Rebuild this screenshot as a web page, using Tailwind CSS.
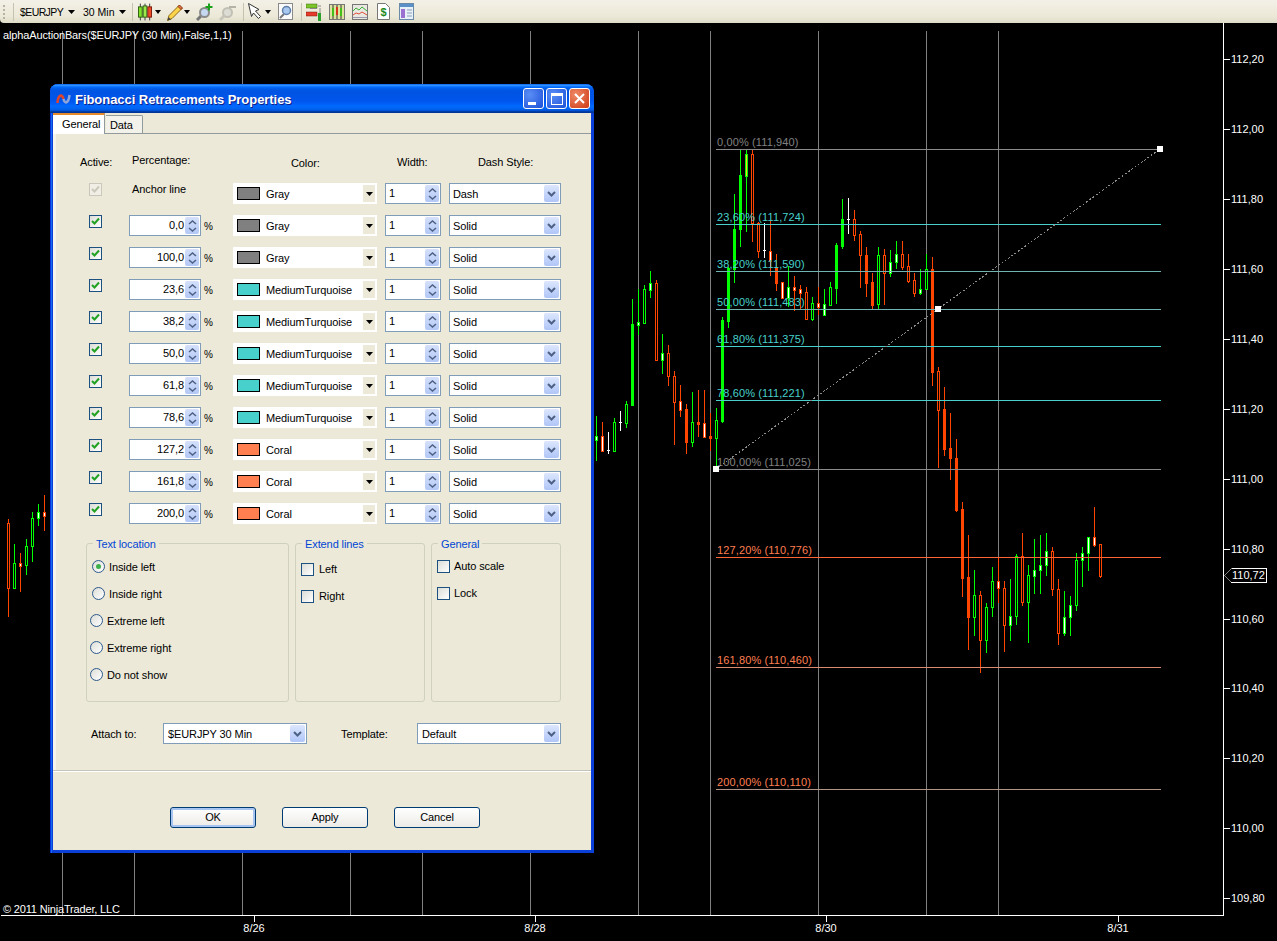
<!DOCTYPE html>
<html lang="en">
<head>
    <meta charset="UTF-8">
    <title>Fibonacci Retracements Properties</title>
    <script src="https://cdn.jsdelivr.net/npm/@tailwindcss/browser@4"></script>
</head>
<body class="bg-black overflow-hidden font-['Liberation_Sans',Arial,sans-serif] text-[11px] leading-[14px] text-black">
<div class="relative w-[1277px] h-[941px] flex flex-col">

    <!-- toolbar -->
    <div class="h-[23px] shrink-0 flex items-center bg-[linear-gradient(#f3f1e7,#ece9d8_70%,#dedbc8)] rounded-bl-[4px] text-[10.5px] whitespace-nowrap">
        <div class="ml-[3px] w-[2px] h-[14px] border-l-2 border-dotted border-[#b5b3a5]"></div>
        <div class="ml-[8px] w-px h-[18px] bg-[#c5c2b0]"></div>
        <span class="ml-[6px] w-[43px] tracking-[-0.6px]">$EURJPY</span>
        <svg class="ml-[5px]" width="7" height="4"><path d="M0 0h7L3.500 4z"/></svg>
        <span class="ml-[8px] w-[31px]">30 Min</span>
        <svg class="ml-[5px]" width="7" height="4"><path d="M0 0h7L3.500 4z"/></svg>
        <div class="ml-[6px] w-px h-[18px] bg-[#c5c2b0]"></div>
        <!-- candles -->
        <svg class="ml-[5px]" width="14" height="18" viewBox="0 0 15 18">
            <path d="M2.500 0v18M7.500 0v18M12.500 0v18" stroke="#333"/>
            <rect x="0.500" y="3.500" width="4" height="11" fill="#7fe02a" stroke="#2c5a10"/>
            <rect x="5.500" y="2.500" width="4" height="12" fill="#9be84a" stroke="#2c5a10"/>
            <rect x="10.500" y="3.500" width="4" height="11" fill="#f04a2a" stroke="#7a1c08"/>
        </svg>
        <svg class="ml-[3px]" width="6" height="4"><path d="M0 0h6L3 4z"/></svg>
        <!-- pencil -->
        <svg class="ml-[6px]" width="16" height="18" viewBox="0 0 16 18">
            <path d="M0.500 17.500l1.500-5L12 2.500l3 3L5 15.500z" fill="#fbd44a" stroke="#8a6a14"/>
            <path d="M11 3.500l1.500-1.500 3 3L14 6.500z" fill="#e8704a" stroke="#8a3a14"/>
            <path d="M0.500 17.500l1-3.500 2.500 2.500z" fill="#444"/>
        </svg>
        <svg class="ml-[1px]" width="6" height="4"><path d="M0 0h6L3 4z"/></svg>
        <!-- zoom in -->
        <svg class="ml-[6px]" width="17" height="18" viewBox="0 0 17 18">
            <path d="M1 17l5-5" stroke="#777" stroke-width="3"/>
            <circle cx="8.500" cy="9.500" r="4.500" fill="#c5d8f0" stroke="#8a8a8a" stroke-width="2"/>
            <path d="M13 0.500v7M9.500 4h7" stroke="#1aa01a" stroke-width="2"/>
        </svg>
        <!-- zoom out -->
        <svg class="ml-[6px]" width="17" height="18" viewBox="0 0 17 18">
            <path d="M1 17l5-5" stroke="#c8c6ba" stroke-width="3"/>
            <circle cx="8.500" cy="9.500" r="4.500" fill="#dcdcd4" stroke="#c2c0b4" stroke-width="2"/>
            <path d="M10 4h7" stroke="#b5b3a7" stroke-width="2"/>
        </svg>
        <div class="ml-[7px] w-px h-[18px] bg-[#c5c2b0]"></div>
        <!-- pointer -->
        <svg class="ml-[4px]" width="14" height="17" viewBox="0 0 14 17">
            <path d="M0.500 0.500v0L11 6.500 7.500 8l5 5.500-2 2-5-5.500-2 3.500z" fill="#fff" stroke="#333"/>
        </svg>
        <svg class="ml-[3px]" width="6" height="4"><path d="M0 0h6L3 4z"/></svg>
        <!-- zoom page -->
        <svg class="ml-[7px]" width="15" height="17" viewBox="0 0 15 17">
            <rect x="0.500" y="0.500" width="14" height="16" fill="#fafafa" stroke="#8a8a8a"/>
            <path d="M2 15l4-4" stroke="#777" stroke-width="2"/>
            <circle cx="8.500" cy="7.500" r="4" fill="#a8c8ef" stroke="#5f7fa8" stroke-width="1.500"/>
        </svg>
        <div class="ml-[8px] w-px h-[18px] bg-[#c5c2b0]"></div>
        <!-- strategy bars -->
        <svg class="ml-[4px]" width="16" height="18" viewBox="0 0 16 18">
            <rect x="0" y="1" width="11" height="4" fill="#7cc52a" stroke="#3c6a14" stroke-width="0.500"/>
            <rect x="0" y="9" width="11" height="4" fill="#e83a2a" stroke="#7a1c08" stroke-width="0.500"/>
            <path d="M4 5.500h7M12 3h3M14 5v13" stroke="#888"/>
            <rect x="12" y="10" width="3" height="8" fill="#2ca02c"/>
        </svg>
        <!-- candle window -->
        <svg class="ml-[7px]" width="16" height="18" viewBox="0 0 16 18">
            <rect x="0.500" y="1.500" width="15" height="15" fill="#dfe3a0" stroke="#777"/>
            <path d="M4 2v14M8 2v14M12 2v14" stroke="#333"/>
            <rect x="3" y="5" width="2" height="8" fill="#42c01a"/>
            <rect x="7" y="4" width="2" height="8" fill="#d8341a"/>
            <rect x="11" y="5" width="2" height="8" fill="#42c01a"/>
        </svg>
        <!-- indicator window -->
        <svg class="ml-[7px]" width="16" height="18" viewBox="0 0 16 18">
            <rect x="0.500" y="1.500" width="15" height="15" fill="#e8e8e0" stroke="#777"/>
            <path d="M1 8l3-3 3 2 3-3 5 4" fill="none" stroke="#3cb03c"/>
            <path d="M1 12l3-2 3 1 3-2 5 3" fill="none" stroke="#e0503c"/>
            <path d="M1 14.500h14" stroke="#99a"/>
        </svg>
        <!-- dollar doc -->
        <svg class="ml-[9px]" width="13" height="17" viewBox="0 0 13 17">
            <path d="M0.500 0.500h8l4 4v12h-12z" fill="#fff" stroke="#777"/>
            <text x="6.500" y="13" text-anchor="middle" font-size="11" font-weight="700" fill="#1c8a1c">$</text>
        </svg>
        <!-- panel window -->
        <svg class="ml-[9px]" width="15" height="17" viewBox="0 0 15 17">
            <rect x="0.500" y="0.500" width="14" height="16" fill="#e8f0f8" stroke="#6a8aa8"/>
            <rect x="1" y="1" width="13" height="3" fill="#5a90c8"/>
            <rect x="2" y="6" width="4" height="9" fill="#9a70d0"/>
            <path d="M8 7h5M8 10h5M8 13h5" stroke="#8aa0b8"/>
        </svg>
    </div>

    <!-- chart -->
    <div class="relative flex-1">
        <svg id="chart" class="absolute inset-0" width="1277" height="918" viewBox="0 23 1277 918" font-size="11"></svg>
    </div>

    <!-- dialog window, floats over the chart -->
    <div class="absolute left-[50px] top-[84px] w-[544px] h-[769px] flex flex-col rounded-t-[8px] bg-[#0a3fd8] px-[3px] pb-[3px] tracking-[-0.1px] shadow-[inset_1px_0_0_#0831d9,inset_2px_0_0_#166aee]">
        <div class="-mx-[3px] h-[29px] shrink-0 flex items-center rounded-t-[8px] bg-[linear-gradient(#0058ee_0%,#3593ff_4%,#288eff_6%,#127dff_8%,#036ffc_10%,#0262ee_14%,#0057e5_20%,#0054e3_24%,#0055eb_56%,#005bf5_66%,#026afe_76%,#0062ef_86%,#0052d6_92%,#0040ab_94%,#003092_100%)]">
            <svg class="ml-[6px] mt-[1px]" width="15" height="12" viewBox="0 0 15 12">
                <path d="M1.500 10C2 1 6.500 1 7.500 6" fill="none" stroke="#e0442a" stroke-width="2.500"/>
                <path d="M7.500 6c1 5 5 5 6-4" fill="none" stroke="#8fa4d8" stroke-width="2.500"/>
            </svg>
            <span class="ml-[4px] mt-[3px] text-[13px] font-bold text-white tracking-[-0.05px] [text-shadow:1px_1px_0_#0f1f89]">Fibonacci Retracements Properties</span>
            <div class="ml-auto mr-[4px] flex gap-[2px]">
                <div class="w-[21px] h-[21px] rounded-[3px] border border-white bg-[radial-gradient(circle_at_30%_30%,#5a8ef5,#1d50d8)] flex items-end pl-[4px] pb-[3px]">
                    <div class="w-[8px] h-[3px] bg-white"></div>
                </div>
                <div class="w-[21px] h-[21px] rounded-[3px] border border-white bg-[radial-gradient(circle_at_30%_30%,#5a8ef5,#1d50d8)] flex items-center justify-center">
                    <div class="w-[12px] h-[12px] border border-white border-t-[3px]"></div>
                </div>
                <div class="w-[21px] h-[21px] rounded-[3px] border border-white bg-[radial-gradient(circle_at_30%_30%,#ef8a68,#cf3a14)] flex items-center justify-center">
                    <svg width="11" height="11" viewBox="0 0 11 11"><path d="M1 1l9 9M10 1l-9 9" stroke="#fff" stroke-width="2"/></svg>
                </div>
            </div>
        </div>
        <div class="flex-1 flex flex-col bg-[#ece9d8]">
            <!-- tabs -->
            <div class="h-[21px] shrink-0 flex items-end border-b border-[#919b9c]">
                <div class="relative z-10 w-[52px] h-[21px] -mb-px bg-white border-t-2 border-r border-[#e68b2c] border-r-[#919b9c] pl-[9px] pt-[2px]">General</div>
                <div class="ml-px w-[37px] h-[18px] bg-[#f3f2ea] border-t border-r border-[#919b9c] rounded-tr-[2px] pl-[4px] pt-[2px]">Data</div>
            </div>
            <!-- general tab -->
            <div class="h-[636px] shrink-0 shadow-[inset_3px_0_0_#f5f4ec]">
                <div class="flex h-[49px] pl-[27px]">
                    <span class="w-[52px] mt-[21px]">Active:</span>
                    <span class="w-[159px] mt-[19px]">Percentage:</span>
                    <span class="w-[106px] mt-[22px]">Color:</span>
                    <span class="w-[81px] mt-[21px]">Width:</span>
                    <span class="mt-[21px]">Dash Style:</span>
                </div>
                <div id="rows"></div>
                <!-- option groups -->
                <div class="flex gap-[6px] mt-[8px] pl-[33px] h-[159px]">
                    <div class="relative w-[203px] border border-[#d0d0bf] rounded-[3px] pt-[9px]">
                        <span class="absolute -top-[7px] left-[6px] px-[3px] bg-[#ece9d8] text-[#0046d5]">Text location</span>
                        <label class="flex items-center h-[27px] pl-[5px] gap-[4px]"><span class="w-[13px] h-[13px] rounded-full border border-[#2c5a8c] bg-[linear-gradient(135deg,#dcdcd7,#fff)] flex items-center justify-center"><span class="w-[5px] h-[5px] rounded-full bg-[#3cb04a]"></span></span>Inside left</label>
                        <label class="flex items-center h-[27px] pl-[5px] gap-[4px]"><span class="w-[13px] h-[13px] rounded-full border border-[#2c5a8c] bg-[linear-gradient(135deg,#dcdcd7,#fff)]"></span>Inside right</label>
                        <label class="flex items-center h-[27px] pl-[3px] gap-[4px]"><span class="w-[13px] h-[13px] rounded-full border border-[#2c5a8c] bg-[linear-gradient(135deg,#dcdcd7,#fff)]"></span>Extreme left</label>
                        <label class="flex items-center h-[27px] pl-[3px] gap-[4px]"><span class="w-[13px] h-[13px] rounded-full border border-[#2c5a8c] bg-[linear-gradient(135deg,#dcdcd7,#fff)]"></span>Extreme right</label>
                        <label class="flex items-center h-[27px] pl-[3px] gap-[4px]"><span class="w-[13px] h-[13px] rounded-full border border-[#2c5a8c] bg-[linear-gradient(135deg,#dcdcd7,#fff)]"></span>Do not show</label>
                    </div>
                    <div class="relative w-[130px] border border-[#d0d0bf] rounded-[3px] pt-[12px]">
                        <span class="absolute -top-[7px] left-[6px] px-[3px] bg-[#ece9d8] text-[#0046d5]">Extend lines</span>
                        <label class="flex items-center h-[27px] pl-[5px] gap-[5px]"><span class="w-[13px] h-[13px] border border-[#1c5180] bg-[linear-gradient(135deg,#dcdcd7,#fff)]"></span><span class="-mt-[2px]">Left</span></label>
                        <label class="flex items-center h-[27px] pl-[5px] gap-[5px]"><span class="w-[13px] h-[13px] border border-[#1c5180] bg-[linear-gradient(135deg,#dcdcd7,#fff)]"></span><span class="-mt-[2px]">Right</span></label>
                    </div>
                    <div class="relative w-[130px] border border-[#d0d0bf] rounded-[3px] pt-[9px]">
                        <span class="absolute -top-[7px] left-[6px] px-[3px] bg-[#ece9d8] text-[#0046d5]">General</span>
                        <label class="flex items-center h-[27px] pl-[5px] gap-[4px]"><span class="w-[13px] h-[13px] border border-[#1c5180] bg-[linear-gradient(135deg,#dcdcd7,#fff)]"></span><span class="-mt-[2px]">Auto scale</span></label>
                        <label class="flex items-center h-[27px] pl-[5px] gap-[4px]"><span class="w-[13px] h-[13px] border border-[#1c5180] bg-[linear-gradient(135deg,#dcdcd7,#fff)]"></span><span class="-mt-[2px]">Lock</span></label>
                    </div>
                </div>
                <!-- attach and template -->
                <div class="flex items-center mt-[21px] h-[21px] pl-[38px]">
                    <span class="w-[72px]">Attach to:</span>
                    <div class="w-[144px] h-[21px] bg-white border border-[#7f9db9] flex items-center justify-between pl-[4px] pr-px">$EURJPY 30 Min
                        <span class="w-[15px] h-[17px] rounded-[2px] bg-[linear-gradient(#dce6fd,#b0c6f8)] flex items-center justify-center"><svg width="9" height="6" viewBox="0 0 9 6"><path d="M1 1l3.500 3.500L8 1" fill="none" stroke="#4d6185" stroke-width="2"/></svg></span>
                    </div>
                    <span class="ml-[34px] w-[76px]">Template:</span>
                    <div class="w-[144px] h-[21px] bg-white border border-[#7f9db9] flex items-center justify-between pl-[4px] pr-px">Default
                        <span class="w-[15px] h-[17px] rounded-[2px] bg-[linear-gradient(#dce6fd,#b0c6f8)] flex items-center justify-center"><svg width="9" height="6" viewBox="0 0 9 6"><path d="M1 1l3.500 3.500L8 1" fill="none" stroke="#4d6185" stroke-width="2"/></svg></span>
                    </div>
                </div>
            </div>
            <div class="h-[2px] shrink-0 border-t border-[#c4c4ba] bg-white"></div>
            <!-- buttons -->
            <div class="flex gap-[26px] pl-[117px] pt-[35px]">
                <button class="w-[86px] h-[21px] pb-[2px] rounded-[3px] border border-[#003c74] bg-[linear-gradient(#fff,#ecebe6)] shadow-[inset_0_0_0_2px_#a8c4f0]">OK</button>
                <button class="w-[86px] h-[21px] pb-[2px] rounded-[3px] border border-[#003c74] bg-[linear-gradient(#fff,#ecebe6)]">Apply</button>
                <button class="w-[86px] h-[21px] pb-[2px] rounded-[3px] border border-[#003c74] bg-[linear-gradient(#fff,#ecebe6)]">Cancel</button>
            </div>
        </div>
    </div>
</div>

<script>
    // dialog rows: percent (null = anchor), colour name, swatch class, dash style
    const levels = [
        [null, "Gray", "bg-[#808080]", "Dash"],
        ["0,0", "Gray", "bg-[#808080]", "Solid"],
        ["100,0", "Gray", "bg-[#808080]", "Solid"],
        ["23,6", "MediumTurquoise", "bg-[#48d1cc]", "Solid"],
        ["38,2", "MediumTurquoise", "bg-[#48d1cc]", "Solid"],
        ["50,0", "MediumTurquoise", "bg-[#48d1cc]", "Solid"],
        ["61,8", "MediumTurquoise", "bg-[#48d1cc]", "Solid"],
        ["78,6", "MediumTurquoise", "bg-[#48d1cc]", "Solid"],
        ["127,2", "Coral", "bg-[#ff7f50]", "Solid"],
        ["161,8", "Coral", "bg-[#ff7f50]", "Solid"],
        ["200,0", "Coral", "bg-[#ff7f50]", "Solid"],
    ];
    const spin = `<span class="w-[14px] h-[17px] rounded-[2px] bg-[linear-gradient(#d4e0fb,#b4c8f6)] flex flex-col items-center justify-center gap-[2px]">
        <svg width="9" height="5" viewBox="0 0 9 5"><path d="M1 4l3.500-3L8 4" fill="none" stroke="#4d6185" stroke-width="1.500"/></svg>
        <svg width="9" height="5" viewBox="0 0 9 5"><path d="M1 1l3.500 3L8 1" fill="none" stroke="#4d6185" stroke-width="1.500"/></svg></span>`;
    document.getElementById("rows").innerHTML = levels.map(([pct, name, swatch, dash]) => {
        const check = pct === null
            ? `<span class="w-[13px] h-[13px] border border-[#cac8bb] bg-[#f1efe5] flex items-center justify-center"><svg width="9" height="9" viewBox="0 0 9 9"><path d="M1 4l2.500 2.500L8 1.500" fill="none" stroke="#cac8bb" stroke-width="2"/></svg></span>`
            : `<span class="w-[13px] h-[13px] border border-[#1c5180] bg-[linear-gradient(135deg,#dcdcd7,#fff)] flex items-center justify-center"><svg width="9" height="9" viewBox="0 0 9 9"><path d="M1 4l2.500 2.500L8 1.500" fill="none" stroke="#21a121" stroke-width="2"/></svg></span>`;
        const pctCell = pct === null
            ? `<span class="w-[104px] ml-[27px] pl-[3px] -mt-[1px]">Anchor line</span>`
            : `<span class="w-[72px] h-[21px] ml-[27px] bg-white border border-[#7f9db9] flex items-center justify-end pr-px"><span class="-mt-[2px]">${pct}</span><span class="w-px"></span>${spin}</span><span class="w-[32px] pl-[3px] pt-[5px] text-[10px]">%</span>`;
        return `<div class="flex h-[32px] pl-[36px] items-start">
            ${check}${pctCell}
            <span class="w-[144px] h-[21px] bg-white flex items-center pl-[4px] pr-[2px]">
                <span class="w-[23px] h-[13px] border border-black ${swatch}"></span>
                <span class="ml-[6px] flex-1">${name}</span>
                <span class="w-[12px] h-[17px] bg-[#ece9d8] flex items-center justify-center"><svg width="7" height="4"><path d="M0 0h7L3.500 4z"/></svg></span>
            </span>
            <span class="w-[56px] h-[21px] ml-[8px] bg-white border border-[#7f9db9] flex items-center justify-between pl-[3px] pr-px"><span class="-mt-[2px]">1</span>${spin}</span>
            <span class="w-[112px] h-[21px] ml-[8px] bg-white border border-[#7f9db9] flex items-center justify-between pl-[3px] pr-px">${dash}
                <span class="w-[15px] h-[17px] rounded-[2px] bg-[linear-gradient(#dce6fd,#b0c6f8)] flex items-center justify-center"><svg width="9" height="6" viewBox="0 0 9 6"><path d="M1 1l3.500 3.500L8 1" fill="none" stroke="#4d6185" stroke-width="2"/></svg></span>
            </span>
        </div>`;
    }).join("");

    // chart, all numbers are page pixels
    const GREEN = "#00ff00", RED = "#ff4500", GRID = "#808080";
    // x, wickTop, wickBottom, bodyTop, bodyBottom, kind
    const candles = [
        [8,519,617,523,588,"r"],[14,544,589,563,588,"g"],[20,553,592,563,566,"rw"],[26,539,575,546,565,"g"],
        [32,512,562,518,546,"g"],[38,504,526,512,518,"gw"],[44,495,531,512,516,"rw"],
        [596,416,461,436,440,"gw"],[602,422,452,436,451,"rw"],[608,432,454,450,450,"d"],[614,418,451,422,451,"g"],
        [620,411,431,422,422,"d"],[626,401,428,404,423,"g"],[632,299,405,324,405,"G"],[638,289,335,322,325,"gw"],
        [644,285,323,289,323,"g"],[650,271,298,283,290,"gw"],[656,280,360,283,360,"r"],[662,334,374,353,360,"gw"],
        [668,345,386,353,376,"r"],[674,371,445,376,402,"r"],[680,385,417,401,410,"rw"],[686,404,454,409,442,"R"],
        [692,392,447,422,442,"g"],[698,390,437,422,424,"R"],[704,390,438,423,437,"rw"],[710,413,451,436,438,"R"],
        [716,408,467,420,438,"g"],[722,317,423,320,421,"G"],[728,267,328,268,321,"G"],[734,194,283,229,269,"G"],
        [740,150,247,175,229,"G"],[746,150,232,154,176,"gy"],[752,150,242,154,223,"r"],[758,222,258,223,251,"r"],
        [764,223,258,250,250,"d"],[770,221,276,251,261,"rw"],[776,254,291,267,283,"R"],[782,282,298,282,298,"rw"],
        [788,266,307,287,298,"gw"],[794,276,311,287,290,"rw"],[800,285,309,289,293,"rw"],[806,287,319,292,319,"r"],
        [812,297,321,303,319,"g"],[818,287,315,303,307,"rw"],[824,289,316,304,315,"gw"],[830,282,305,287,305,"g"],
        [836,243,304,245,288,"G"],[842,199,249,219,246,"G"],[848,198,234,219,219,"d"],[854,210,241,219,235,"r"],
        [860,231,288,234,255,"r"],[866,247,297,255,283,"R"],[872,273,309,282,305,"R"],[878,247,309,255,304,"g"],
        [884,249,305,255,273,"r"],[890,250,277,262,273,"gw"],[896,241,269,254,262,"gw"],[902,241,270,254,267,"r"],
        [908,254,283,266,281,"r"],[914,273,297,280,293,"r"],[920,269,295,289,293,"gw"],[926,254,289,269,289,"g"],
        [932,257,386,269,372,"R"],[938,367,468,371,410,"r"],[944,387,456,409,449,"R"],[950,413,480,448,458,"R"],
        [956,439,512,458,510,"R"],[962,502,597,509,578,"R"],[968,535,650,577,617,"R"],[974,570,636,595,617,"g"],
        [980,591,673,595,640,"r"],[986,603,653,607,640,"g"],[992,567,617,581,607,"g"],[998,557,603,581,588,"rw"],
        [1004,581,652,588,625,"r"],[1010,579,641,616,625,"gw"],[1016,554,625,556,616,"g"],[1022,533,606,556,602,"r"],
        [1028,565,643,575,602,"g"],[1034,539,594,570,576,"gw"],[1040,535,594,565,570,"gw"],[1046,533,576,551,565,"gw"],
        [1052,547,596,551,589,"r"],[1058,579,645,589,633,"r"],[1064,591,636,617,633,"gw"],[1070,596,636,605,617,"gw"],
        [1076,553,611,560,605,"g"],[1082,547,587,553,560,"gw"],[1088,537,571,537,553,"gw"],[1094,507,547,537,545,"rw"],
        [1100,544,578,544,576,"r"],
    ];
    const fib = [
        [149,"#8a8a8a","0,00% (111,940)","#808080",142],
        [224,"#48d1cc","23,60% (111,724)","#48d1cc",217],
        [271,"#6fb4b0","38,20% (111,590)","#48d1cc",264],
        [309,"#6fb4b0","50,00% (111,483)","#48d1cc",302],
        [346,"#48d1cc","61,80% (111,375)","#48d1cc",339],
        [400,"#48d1cc","78,60% (111,221)","#48d1cc",393],
        [469,"#8a8a8a","100,00% (111,025)","#808080",462],
        [557,"#ff6633","127,20% (110,776)","#ff7f50",550],
        [667,"#d98a70","161,80% (110,460)","#ff7f50",660],
        [789,"#b09488","200,00% (110,110)","#ff7f50",782],
    ];
    const rect = (x, y, w, h, fill) => `<rect x="${x}" y="${y}" width="${w}" height="${h}" fill="${fill}"/>`;
    const label = (x, y, s, fill, anchor = "start", spacing = 0) => `<text x="${x}" y="${y + 4}" fill="${fill}" text-anchor="${anchor}" letter-spacing="${spacing}">${s}</text>`;
    let svg = "";
    for (const x of [62, 134, 242, 350, 422, 530, 638, 710, 818, 926, 998]) svg += rect(x, 31, 1, 884, GRID);
    for (const [x, wt, wb, bt, bb, kind] of candles) {
        if (kind === "d") { svg += rect(x, wt, 1, wb - wt, "#fff") + rect(x - 1, bt, 3, 1, "#fff"); continue; }
        const col = kind[0] === "g" || kind[0] === "G" ? GREEN : RED;
        svg += rect(x, wt, 1, wb - wt, col) + rect(x - 1, bt, 3, bb - bt + 1, col);
        const inner = { g: "#000", r: "#000", gw: "#fff", rw: "#fff", gy: "#ffd21f" }[kind];
        if (inner && bb - bt > 1) svg += rect(x, bt + 1, 1, bb - bt - 1, inner);
    }
    for (const [y, col, text, textCol, ty] of fib) svg += rect(716, y, 445, 1, col) + label(717, ty, text, textCol, "start", 0.13);
    svg += `<line x1="716" y1="469" x2="1160" y2="149" stroke="#8c8c8c" stroke-dasharray="2 2" shape-rendering="crispEdges"/>`;
    for (const [x, y] of [[716, 469], [938, 309], [1160, 149]]) svg += rect(x - 3, y - 3, 6, 6, "#fff");
    // axes
    svg += rect(1223, 23, 1, 893, "#fff") + rect(1, 915, 1223, 1, "#fff");
    [["112,20",59],["112,00",129],["111,80",199],["111,60",269],["111,40",339],["111,20",409],["111,00",479],
     ["110,80",549],["110,60",619],["110,40",688],["110,20",758],["110,00",828],["109,80",898]].forEach(([s, y]) => {
        svg += rect(1224, y, 6, 1, "#fff") + label(1231, y, s, "#fff");
    });
    [["8/26",254],["8/28",535],["8/30",826],["8/31",1118]].forEach(([s, x]) => {
        svg += rect(x, 916, 1, 6, "#fff") + label(x, 928, s, "#fff", "middle");
    });
    // last price flag
    svg += `<path d="M1231.500 568.500H1266.500V582.500H1231.500L1224.500 575.500Z" fill="#000" stroke="#fff" shape-rendering="crispEdges"/>`;
    svg += `<path d="M1231.500 568.500L1224.500 575.500L1231.500 582.500" fill="none" stroke="#808080" shape-rendering="crispEdges"/>`;
    svg += label(1232, 575, "110,72", "#fff");
    svg += label(3, 35, "alphaAuctionBars($EURJPY (30 Min),False,1,1)", "#fff", "start", -0.14);
    svg += label(3, 909, "© 2011 NinjaTrader, LLC", "#fff", "start", -0.17);
    document.getElementById("chart").innerHTML = svg;
</script>
</body>
</html>
